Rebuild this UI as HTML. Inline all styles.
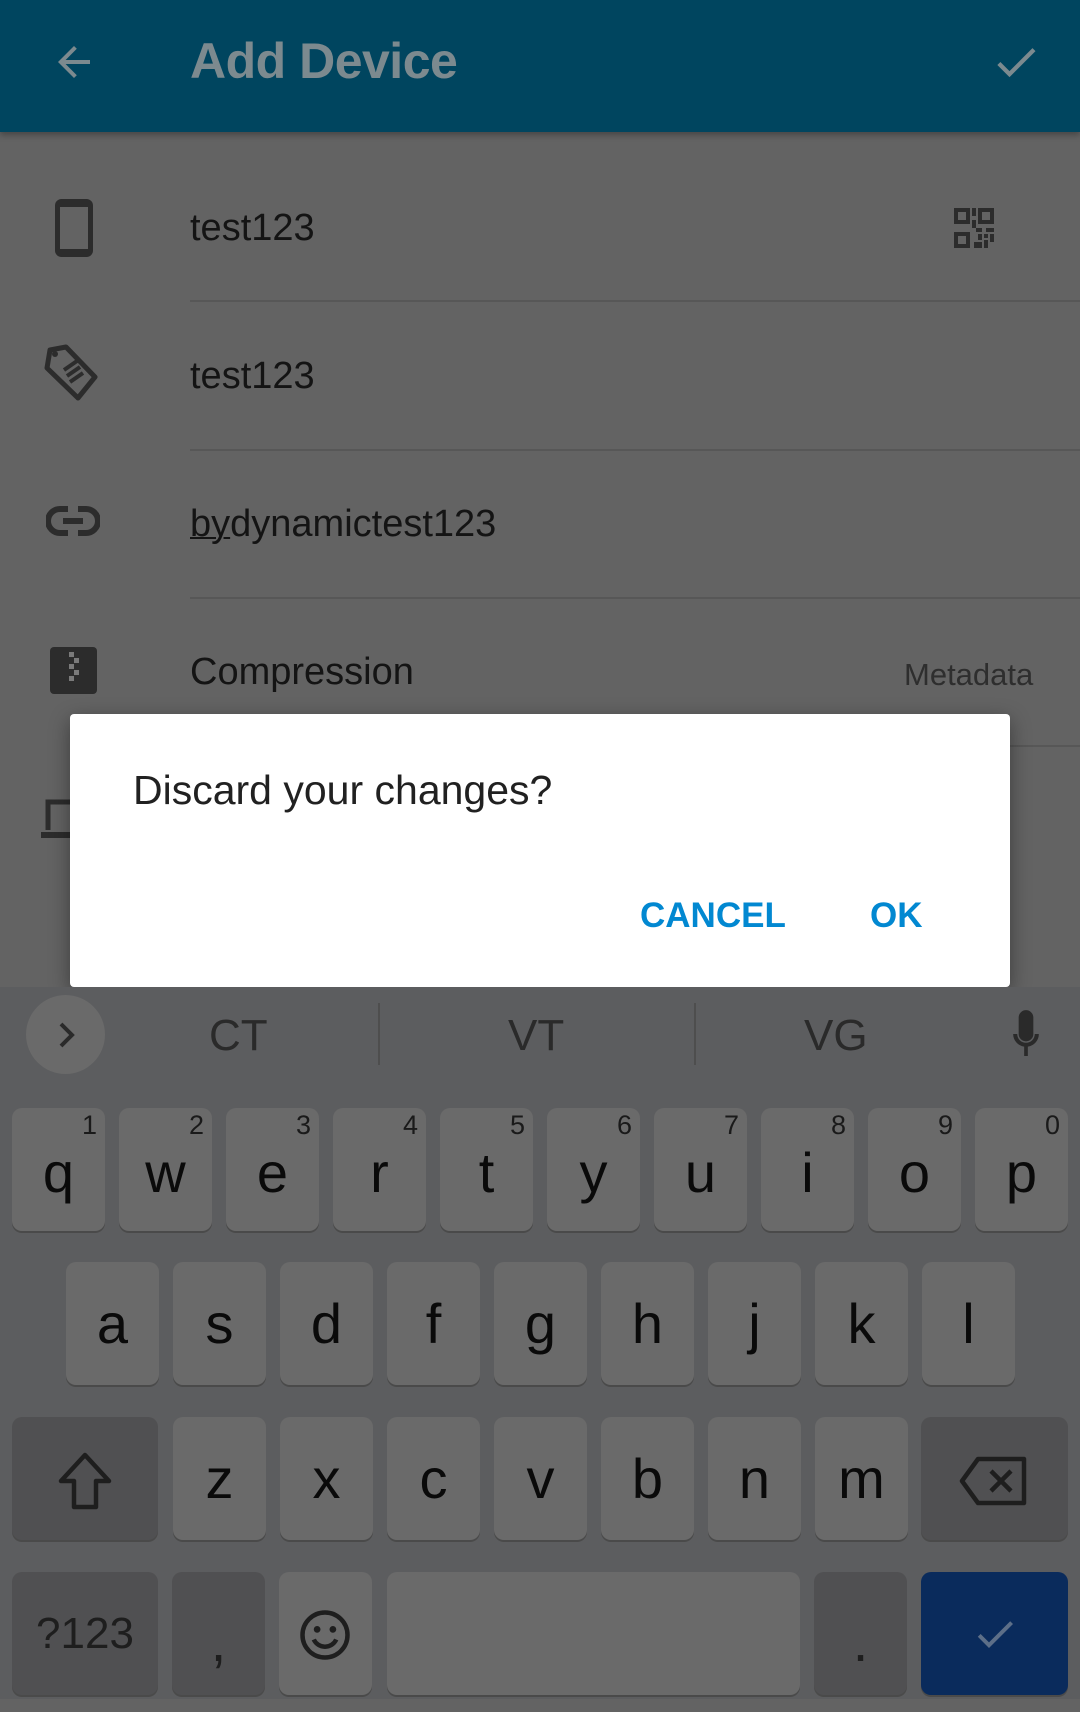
<!DOCTYPE html>
<html><head><meta charset="utf-8"><style>
*{margin:0;padding:0;box-sizing:border-box}
body{width:1080px;height:1699px;background:#636363;position:relative;overflow:hidden;font-family:"Liberation Sans",sans-serif}
.a{position:absolute}
.bar{left:0;top:0;width:1080px;height:132px;background:#00455f;box-shadow:0 3px 6px rgba(0,0,0,.3)}
.title{left:190px;top:32px;font-size:50px;font-weight:bold;color:#7c8a8f;letter-spacing:-0.5px}
.row{left:190px;font-size:38px;color:#141414}
.sep{left:190px;width:890px;height:2px;background:#575757}
.dlg{left:70px;top:714px;width:940px;height:273px;background:#fff;border-radius:4px;box-shadow:0 6px 20px rgba(0,0,0,.4)}
.kb{left:0;top:987px;width:1080px;height:712px;background:#5c5d5f}
.k{position:absolute;background:#6a6a6a;border-radius:10px;box-shadow:0 2px 0 #4a4a4a;color:#0a0a0a;font-size:56px;text-align:center}
.k.s{background:#505052}
.n{position:absolute;right:8px;top:2px;font-size:27px;line-height:30px;color:#1a1a1a}
.sug{font-size:44px;color:#2a2a2a;top:1011px}
</style></head><body>
<div class="a bar"></div>
<svg class="a" style="left:50px;top:38px" width="48" height="48" viewBox="0 0 24 24"><path d="M20 11H7.8l5.6-5.6L12 4l-8 8 8 8 1.4-1.4L7.8 13H20z" fill="#7c8a8f"/></svg>
<div class="a title">Add Device</div>
<svg class="a" style="left:990px;top:36px" width="52" height="52" viewBox="0 0 24 24"><path d="M9 16.2L4.8 12l-1.4 1.4L9 19 21 7l-1.4-1.4z" fill="#7c8a8f"/></svg>

<svg class="a" style="left:55px;top:199px" width="38" height="58" viewBox="0 0 38 58"><rect x="2.5" y="2.5" width="33" height="53" rx="4" fill="none" stroke="#2c2c2c" stroke-width="5"/><rect x="2" y="2" width="34" height="6" fill="#2c2c2c"/><rect x="2" y="50" width="34" height="6" fill="#2c2c2c"/></svg>
<div class="a row" style="top:207px">test123</div>
<svg class="a" style="left:950px;top:204px" width="48" height="48" viewBox="0 0 24 24" fill="#2c2c2c"><path d="M2 2h8v8H2zm2 2v4h4V4zM14 2h8v8h-8zm2 2v4h4V4zM2 14h8v8H2zm2 2v4h4v-4zM11 2h2v4h-2zM11 8h2v4h-2zM13 12h3v2h-3zM18 12h4v2h-4zM14 15h2v3h-2zM17 15h2v2h-2zM20 15h2v4h-2zM12 19h4v3h-4zM17 18h2v4h-2z"/></svg>
<div class="a sep" style="top:300px"></div>

<svg class="a" style="left:44px;top:344px" width="56" height="58" viewBox="0 0 56 58"><path d="M6 6l16-3 29 30-17 21L3 24z" fill="none" stroke="#2c2c2c" stroke-width="5" stroke-linejoin="round"/><circle cx="11" cy="10" r="3" fill="#2c2c2c"/><path d="M20 26l13-9M23 32l13-9M26 38l13-9" stroke="#2c2c2c" stroke-width="4"/></svg>
<div class="a row" style="top:355px">test123</div>
<div class="a sep" style="top:449px"></div>

<svg class="a" style="left:46px;top:503px" width="54" height="36" viewBox="0 0 54 36"><path d="M22 6H14a12 12 0 0 0 0 24h8M32 6h8a12 12 0 0 1 0 24h-8M17 18h20" fill="none" stroke="#2c2c2c" stroke-width="6"/></svg>
<div class="a row" style="top:503px"><span style="text-decoration:underline;text-decoration-thickness:2px">by</span>dynamictest123</div>
<div class="a sep" style="top:597px"></div>

<svg class="a" style="left:50px;top:647px" width="47" height="47" viewBox="0 0 47 47"><rect width="47" height="47" rx="4" fill="#2c2c2c"/><g fill="#7a7a7a"><rect x="19" y="5" width="5" height="5"/><rect x="24" y="11" width="5" height="5"/><rect x="19" y="17" width="5" height="5"/><rect x="24" y="23" width="5" height="5"/><rect x="19" y="29" width="5" height="5"/></g></svg>
<div class="a row" style="top:651px">Compression</div>
<div class="a" style="left:904px;top:657px;font-size:31px;color:#2e2e2e">Metadata</div>
<div class="a sep" style="top:745px"></div>
<svg class="a" style="left:40px;top:798px" width="40" height="42" viewBox="0 0 40 42"><path d="M8 32V4h32" fill="none" stroke="#2c2c2c" stroke-width="5"/><rect x="1" y="34" width="40" height="6" fill="#2c2c2c"/></svg>

<div class="a dlg"></div>
<div class="a" style="left:133px;top:767px;font-size:41px;color:#212121">Discard your changes?</div>
<div class="a" style="left:640px;top:896px;font-size:35px;font-weight:bold;color:#0288d1">CANCEL</div>
<div class="a" style="left:870px;top:896px;font-size:35px;font-weight:bold;color:#0288d1">OK</div>

<div class="a kb"></div>
<div class="a" style="left:26px;top:995px;width:79px;height:79px;border-radius:50%;background:#6a6a6a"></div>
<svg class="a" style="left:52px;top:1020px" width="28" height="30" viewBox="0 0 28 30"><path d="M9 4l11 11L9 26" fill="none" stroke="#2a2a2a" stroke-width="4"/></svg>
<div class="a sug" style="left:209px">CT</div>
<div class="a" style="left:378px;top:1003px;width:2px;height:62px;background:#4e4e4e"></div>
<div class="a sug" style="left:508px">VT</div>
<div class="a" style="left:694px;top:1003px;width:2px;height:62px;background:#4e4e4e"></div>
<div class="a sug" style="left:804px">VG</div>
<svg class="a" style="left:1004px;top:1008px" width="44" height="52" viewBox="0 0 24 28"><path d="M12 18a4 4 0 0 0 4-4V5a4 4 0 0 0-8 0v9a4 4 0 0 0 4 4zm7-4h-2.2a4.8 4.8 0 0 1-9.6 0H5a7 7 0 0 0 6 6.9V26h2v-5.1a7 7 0 0 0 6-6.9z" fill="#2a2a2a"/></svg>

<div class="k" style="left:12px;top:1108px;width:93px;height:123px;line-height:130px">q<span class="n">1</span></div>
<div class="k" style="left:119px;top:1108px;width:93px;height:123px;line-height:130px">w<span class="n">2</span></div>
<div class="k" style="left:226px;top:1108px;width:93px;height:123px;line-height:130px">e<span class="n">3</span></div>
<div class="k" style="left:333px;top:1108px;width:93px;height:123px;line-height:130px">r<span class="n">4</span></div>
<div class="k" style="left:440px;top:1108px;width:93px;height:123px;line-height:130px">t<span class="n">5</span></div>
<div class="k" style="left:547px;top:1108px;width:93px;height:123px;line-height:130px">y<span class="n">6</span></div>
<div class="k" style="left:654px;top:1108px;width:93px;height:123px;line-height:130px">u<span class="n">7</span></div>
<div class="k" style="left:761px;top:1108px;width:93px;height:123px;line-height:130px">i<span class="n">8</span></div>
<div class="k" style="left:868px;top:1108px;width:93px;height:123px;line-height:130px">o<span class="n">9</span></div>
<div class="k" style="left:975px;top:1108px;width:93px;height:123px;line-height:130px">p<span class="n">0</span></div>

<div class="k" style="left:66px;top:1262px;width:93px;height:123px;line-height:123px">a</div>
<div class="k" style="left:173px;top:1262px;width:93px;height:123px;line-height:123px">s</div>
<div class="k" style="left:280px;top:1262px;width:93px;height:123px;line-height:123px">d</div>
<div class="k" style="left:387px;top:1262px;width:93px;height:123px;line-height:123px">f</div>
<div class="k" style="left:494px;top:1262px;width:93px;height:123px;line-height:123px">g</div>
<div class="k" style="left:601px;top:1262px;width:93px;height:123px;line-height:123px">h</div>
<div class="k" style="left:708px;top:1262px;width:93px;height:123px;line-height:123px">j</div>
<div class="k" style="left:815px;top:1262px;width:93px;height:123px;line-height:123px">k</div>
<div class="k" style="left:922px;top:1262px;width:93px;height:123px;line-height:123px">l</div>

<div class="k s" style="left:12px;top:1417px;width:146px;height:123px"></div>
<svg class="a" style="left:55px;top:1450px" width="60" height="64" viewBox="0 0 60 64"><path d="M30 5L6 31h13v26h22V31h13z" fill="none" stroke="#1e1e1e" stroke-width="4.5" stroke-linejoin="round"/></svg>
<div class="k" style="left:173px;top:1417px;width:93px;height:123px;line-height:123px">z</div>
<div class="k" style="left:280px;top:1417px;width:93px;height:123px;line-height:123px">x</div>
<div class="k" style="left:387px;top:1417px;width:93px;height:123px;line-height:123px">c</div>
<div class="k" style="left:494px;top:1417px;width:93px;height:123px;line-height:123px">v</div>
<div class="k" style="left:601px;top:1417px;width:93px;height:123px;line-height:123px">b</div>
<div class="k" style="left:708px;top:1417px;width:93px;height:123px;line-height:123px">n</div>
<div class="k" style="left:815px;top:1417px;width:93px;height:123px;line-height:123px">m</div>
<div class="k s" style="left:921px;top:1417px;width:147px;height:123px"></div>
<svg class="a" style="left:958px;top:1455px" width="70" height="52" viewBox="0 0 70 52"><path d="M20 4h46v44H20L4 26z" fill="none" stroke="#1e1e1e" stroke-width="4.5" stroke-linejoin="round"/><path d="M33 16l20 20M53 16L33 36" stroke="#1e1e1e" stroke-width="4.5"/></svg>

<div class="k s" style="left:12px;top:1572px;width:146px;height:123px;line-height:123px;font-size:44px;color:#1e1e1e">?123</div>
<div class="k s" style="left:172px;top:1572px;width:93px;height:123px;line-height:140px;color:#1e1e1e">,</div>
<div class="k" style="left:279px;top:1572px;width:93px;height:123px"></div>
<svg class="a" style="left:298px;top:1608px" width="54" height="54" viewBox="0 0 24 24"><circle cx="12" cy="12" r="10" fill="none" stroke="#1e1e1e" stroke-width="2"/><circle cx="8.5" cy="9.5" r="1.5" fill="#1e1e1e"/><circle cx="15.5" cy="9.5" r="1.5" fill="#1e1e1e"/><path d="M7 14a5.5 5.5 0 0 0 10 0" fill="none" stroke="#1e1e1e" stroke-width="2"/></svg>
<div class="k" style="left:387px;top:1572px;width:413px;height:123px"></div>
<div class="k s" style="left:814px;top:1572px;width:93px;height:123px;line-height:140px;color:#1e1e1e">.</div>
<div class="k" style="left:921px;top:1572px;width:147px;height:123px;background:#0a2b5c"></div>
<svg class="a" style="left:968px;top:1610px" width="54" height="48" viewBox="0 0 24 24"><path d="M9 16.2L4.8 12l-1.4 1.4L9 19 21 7l-1.4-1.4z" fill="#5d6f88"/></svg>
</body></html>
